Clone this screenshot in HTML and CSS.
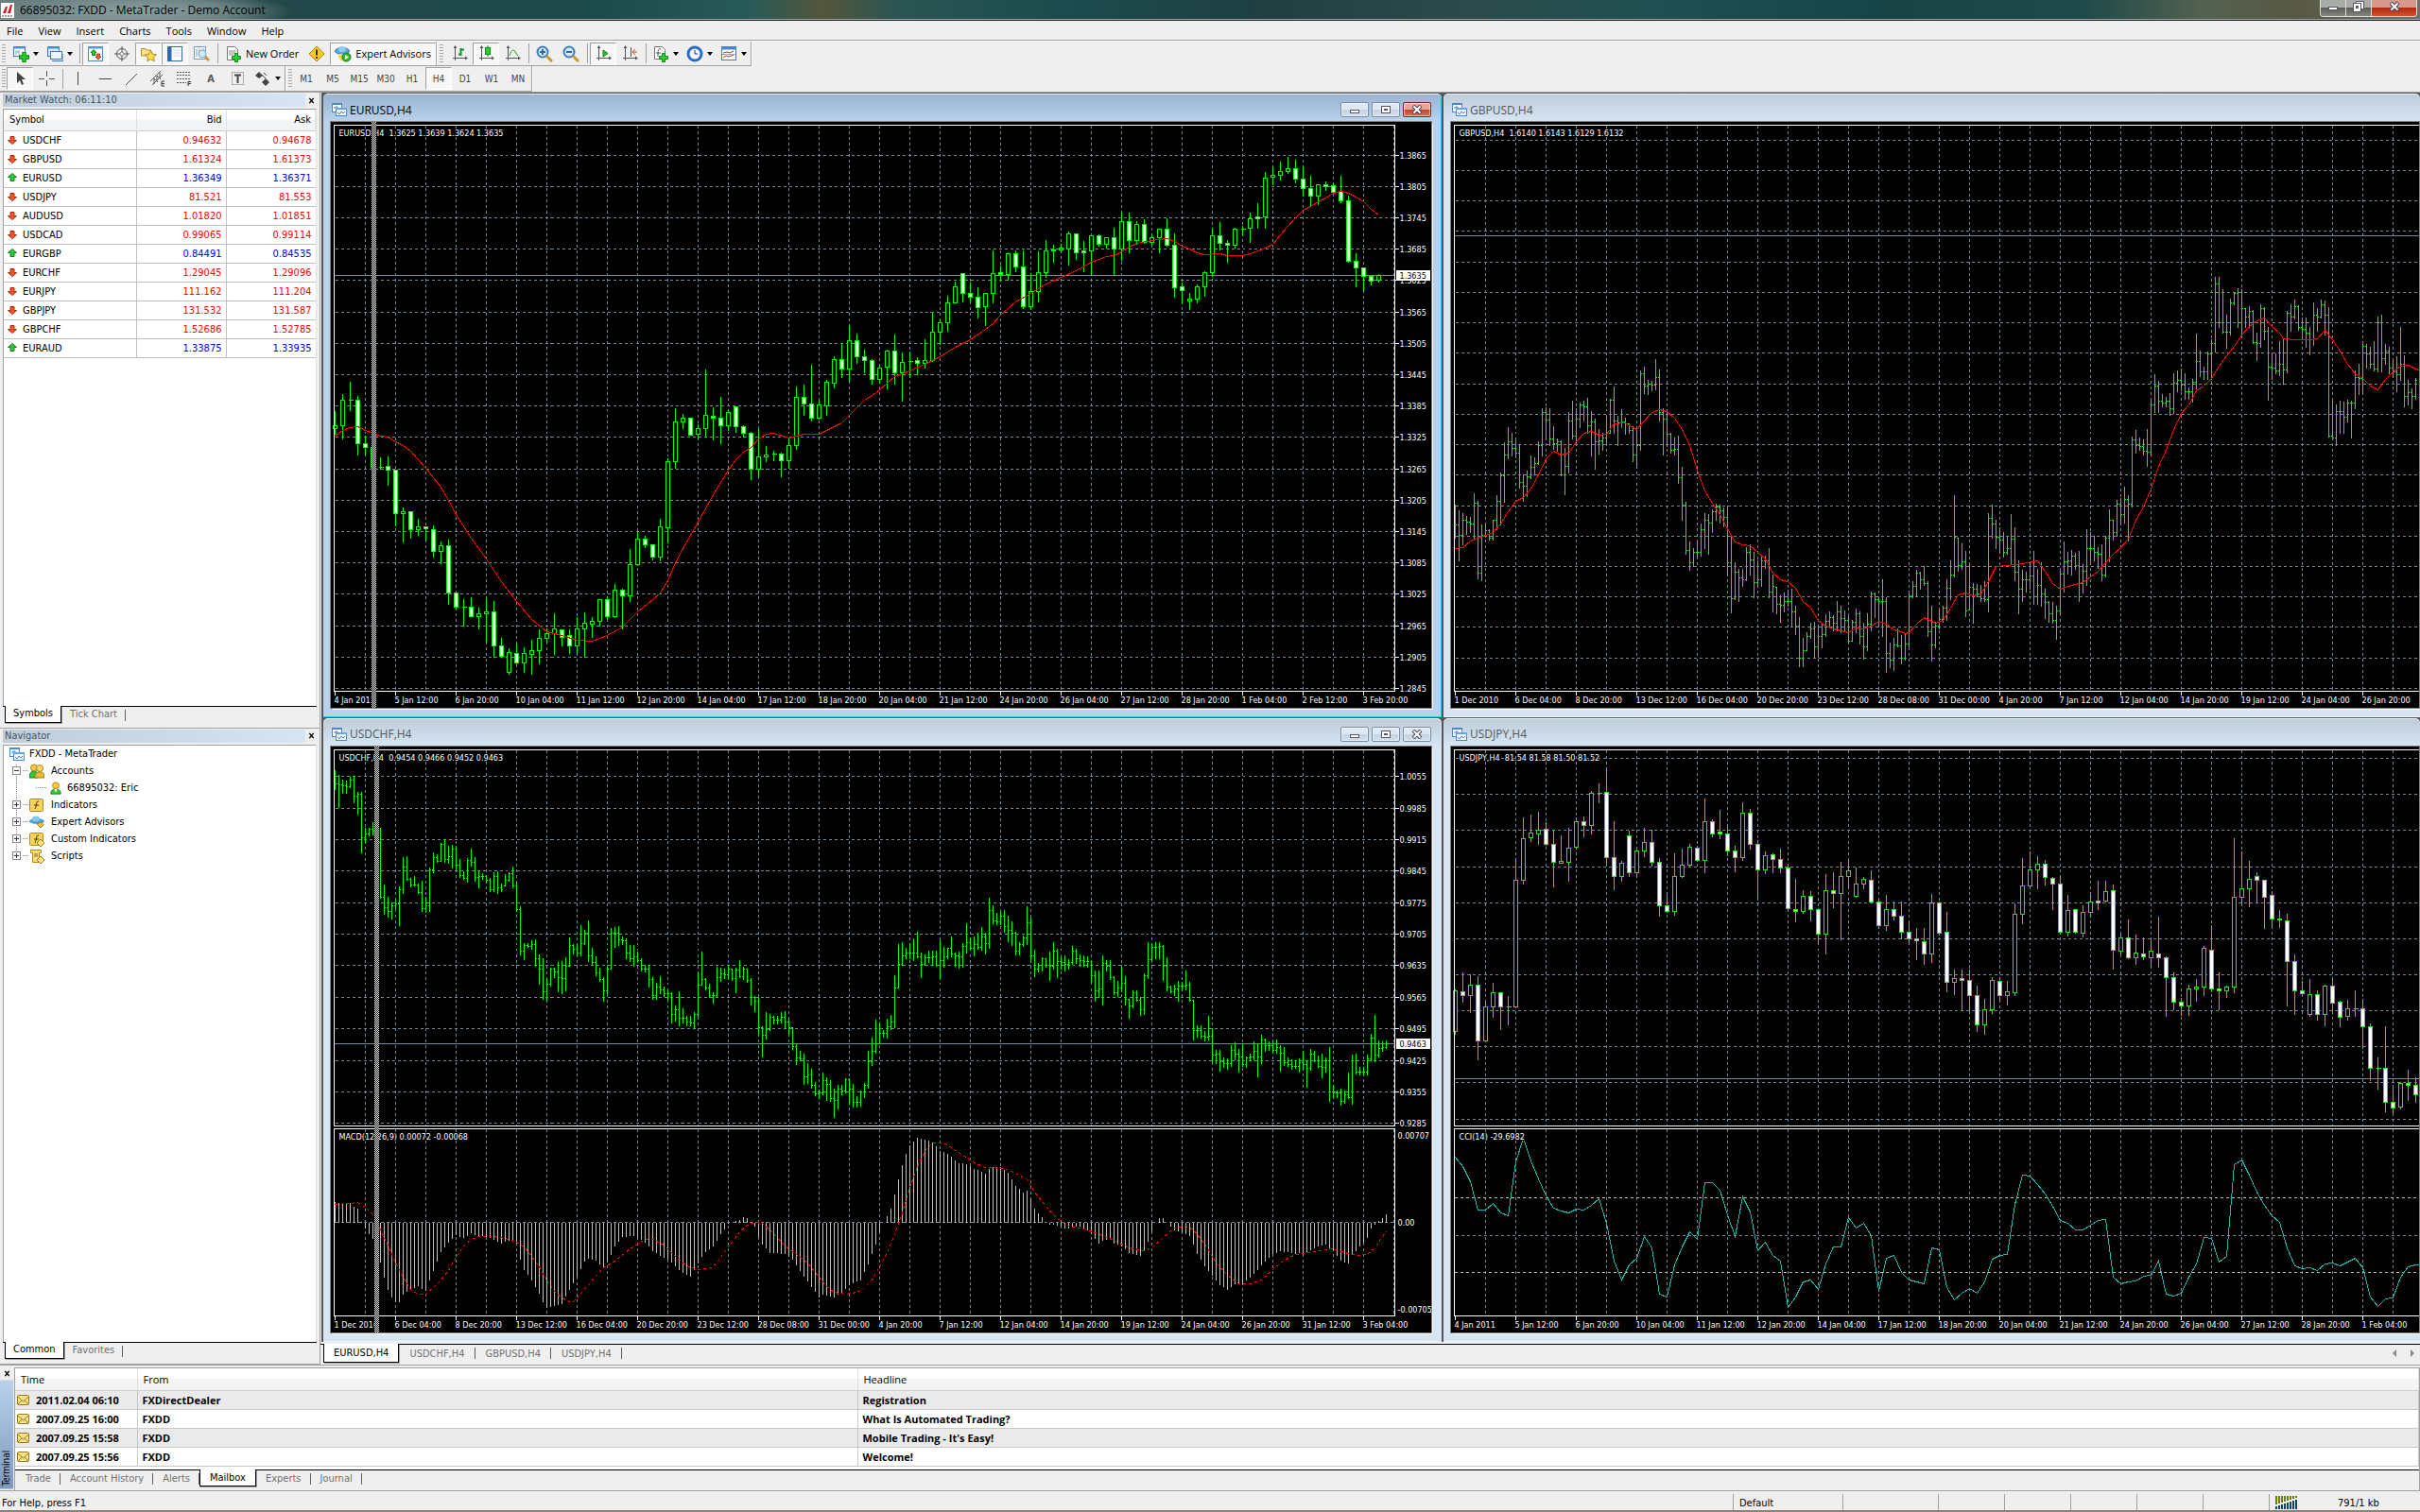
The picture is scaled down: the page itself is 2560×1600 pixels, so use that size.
FILE: index.html
```html
<!DOCTYPE html>
<html lang="en">
<head>
    <meta charset="UTF-8">
    <meta name="viewport" content="width=device-width, initial-scale=1.0">
    <title>66895032: FXDD - MetaTrader - Demo Account</title>
    <link rel="stylesheet" href="styles.css">
</head>
<body>
    <!-- Icon sprite -->
    <svg class="sprite" aria-hidden="true">
        <symbol id="i-plus" viewBox="0 0 10 10"><path d="M3.5 .5h3v3h3v3h-3v3h-3v-3h-3v-3h3z" fill="#2fd02f" stroke="#0a8a12"/></symbol>
        <symbol id="i-chart" viewBox="0 0 16 16"><rect x=".5" y="1.5" width="10" height="9" fill="#fff" stroke="#4a86c8"/><path d="M0 2h11" stroke="#4a86c8" stroke-width="2"/><path d="M2 6h2v-1h2v2h3" stroke="#4a86c8" fill="none"/><rect x="4.5" y="6.500" width="11" height="8" fill="#f4faff" stroke="#4a86c8"/><path d="M4 7h12" stroke="#6aa4e4" stroke-width="2"/><path d="M6 11l2 2 2-3 2 2 2-2" stroke="#4a86c8" fill="none"/></symbol>
        <symbol id="i-newchart" viewBox="0 0 18 18"><rect x="1.500" y="1.500" width="12" height="10" fill="#fff" stroke="#3f78b4"/><path d="M1 2.500h13" stroke="#4a90d0" stroke-width="2"/><path d="M4 5v5M7 5v5M4 7h3" stroke="#7ab"/><use href="#i-plus" x="7" y="7" width="11" height="11"/></symbol>
        <symbol id="i-profiles" viewBox="0 0 18 18"><rect x="1.500" y="1.500" width="12" height="10" fill="#d8eafc" stroke="#3f78b4"/><path d="M1 2.500h13" stroke="#4a90d0" stroke-width="2"/><rect x="4.500" y="6.500" width="12" height="8" fill="#eef6ff" stroke="#3f78b4"/><path d="M6 16.500h12V9" stroke="#3f78b4" fill="none"/></symbol>
        <symbol id="i-market" viewBox="0 0 18 18"><rect x="1.500" y="1.500" width="15" height="15" fill="#fff" stroke="#4a86c8"/><path d="M1 2.500h16" stroke="#5b9bdc" stroke-width="2"/><path d="M7 4.500l3 3H8.500v3h-3v-3H4z" fill="#2fc02f" stroke="#0a8a12"/><path d="M12 15l-3-3h1.500V9h3v3H15z" fill="#f26a3a" stroke="#b03010"/></symbol>
        <symbol id="i-target" viewBox="0 0 18 18"><circle cx="9" cy="9" r="5.500" fill="none" stroke="#555"/><circle cx="9" cy="9" r="2" fill="none" stroke="#888"/><path d="M9 1v6M9 11v6M1 9h6M11 9h6" stroke="#555"/></symbol>
        <symbol id="i-navstar" viewBox="0 0 18 18"><path d="M1.500 3.500h4l1 1.500h5v6h-10z" fill="#ffe38a" stroke="#b98b1c"/><path d="M11.500 5.500l2 3.800 4 .6-3 2.800.8 4-3.800-2-3.600 2 .7-4-3-2.800 4-.6z" fill="#ffe04a" stroke="#b58412"/></symbol>
        <symbol id="i-terminal" viewBox="0 0 18 18"><rect x="1.500" y="1.500" width="15" height="15" fill="#fff" stroke="#2d6ab0"/><path d="M3.500 2v14" stroke="#2d6ab0" stroke-width="4"/><path d="M7 5h8M7 8h8M7 11h8" stroke="#cfd8e4"/></symbol>
        <symbol id="i-tester" viewBox="0 0 18 18"><rect x="1.500" y="1.500" width="12" height="13" fill="#f6faff" stroke="#7a9ac0"/><path d="M4 4v8M7 3v7M11 3v4" stroke="#8ab"/><circle cx="10" cy="9" r="4" fill="#cfe8fb" stroke="#7aa2c4"/><path d="M13 12l4 4" stroke="#c89a3a" stroke-width="3"/></symbol>
        <symbol id="i-order" viewBox="0 0 18 18"><path d="M2.500 1.500h8l3 3v11h-11z" fill="#fff" stroke="#777"/><path d="M4 6h7M4 8h7M4 10h5" stroke="#888"/><use href="#i-plus" x="7" y="8" width="10" height="10"/></symbol>
        <symbol id="i-warn" viewBox="0 0 18 18"><path d="M9 1l8 8-8 8-8-8z" fill="#fbc92c" stroke="#b78406"/><path d="M9 4.500v6M9 12v2" stroke="#333" stroke-width="2"/></symbol>
        <symbol id="i-expert" viewBox="0 0 18 18"><ellipse cx="8" cy="6" rx="7.500" ry="3.500" fill="#5aa8dc" stroke="#2f78b0"/><ellipse cx="8" cy="4" rx="4" ry="3" fill="#8fcbf0"/><path d="M4 9c0 6 3 8 6 8l2-8z" fill="#f2d05a"/><circle cx="12.500" cy="12.500" r="4.500" fill="#2fb52f" stroke="#0a8010"/><path d="M11 10l4 2.500-4 2.500z" fill="#fff"/></symbol>
        <symbol id="i-axes" viewBox="0 0 18 18"><path d="M4.500 2v14M2 13.500h14" stroke="#555" fill="none"/><path d="M4.500 0l2 3h-4zM18 13.500l-3-2v4z" fill="#555"/></symbol>
        <symbol id="i-bars" viewBox="0 0 18 18"><use href="#i-axes"/><path d="M10.500 3v8M8 9.500h2M11 4.500h3" stroke="#0a9a1a" stroke-width="2"/></symbol>
        <symbol id="i-candle" viewBox="0 0 18 18"><use href="#i-axes"/><path d="M11 0v12" stroke="#0a8a12"/><rect x="8.500" y="2.500" width="5" height="7" fill="#2fd02f" stroke="#0a8a12"/></symbol>
        <symbol id="i-line" viewBox="0 0 18 18"><use href="#i-axes"/><path d="M6 11c2-7 5-7 6-4l3 4" stroke="#0a9a1a" fill="none"/></symbol>
        <symbol id="i-zoom" viewBox="0 0 18 18"><circle cx="7" cy="7" r="5.500" fill="#d4ecff" stroke="#3a7cc0" stroke-width="2"/><path d="M11 11l6 6" stroke="#c89a2a" stroke-width="3"/><path d="M4 7h6" stroke="#2a68b0" stroke-width="2"/></symbol>
        <symbol id="i-zoomin" viewBox="0 0 18 18"><use href="#i-zoom"/><path d="M7 4v6" stroke="#2a68b0" stroke-width="2"/></symbol>
        <symbol id="i-scroll" viewBox="0 0 18 18"><use href="#i-axes"/><path d="M9 5l5 3.500L9 12z" fill="#2fc02f" stroke="#0a8a12"/></symbol>
        <symbol id="i-shift" viewBox="0 0 18 18"><use href="#i-axes"/><path d="M10.500 2v10" stroke="#555"/><path d="M12 7h5M12 7l3-3M12 7l3 3" stroke="#d04010" fill="none"/></symbol>
        <symbol id="i-indic" viewBox="0 0 18 18"><path d="M2.500 1.500h8l3 3v10h-11z" fill="#fff" stroke="#777"/><path d="M9 4c-3-1-3 2-3 8M4 8h5" stroke="#555" fill="none"/><use href="#i-plus" x="7" y="8" width="10" height="10"/></symbol>
        <symbol id="i-clock" viewBox="0 0 18 18"><circle cx="9" cy="9" r="7" fill="#eef6ff" stroke="#2a6cc0" stroke-width="3"/><path d="M9 5v4h3" stroke="#335" fill="none"/></symbol>
        <symbol id="i-templ" viewBox="0 0 18 18"><rect x="1.500" y="1.500" width="15" height="14" fill="#fff" stroke="#3f78b4"/><path d="M1 3h16" stroke="#4a86c8" stroke-width="3"/><path d="M3 8l4-1 3 1 4-2M3 13l3-2 3 1 5-2" stroke="#a33" fill="none"/><path d="M2 9.500h14" stroke="#9ab"/></symbol>
        <symbol id="i-cursor" viewBox="0 0 18 18"><path d="M6 2v12l3-3 2 5 2-1-2-5h4z" fill="#444"/></symbol>
        <symbol id="i-cross" viewBox="0 0 18 18"><path d="M9.500 1v6M9.500 11v6M1 9.500h6M12 9.500h6" stroke="#555"/></symbol>
        <symbol id="i-vline" viewBox="0 0 18 18"><path d="M8.500 2v14" stroke="#444"/></symbol>
        <symbol id="i-hline" viewBox="0 0 18 18"><path d="M3 9.500h13" stroke="#444"/></symbol>
        <symbol id="i-trend" viewBox="0 0 18 18"><path d="M3 16L15 4" stroke="#555"/></symbol>
        <symbol id="i-channel" viewBox="0 0 18 18"><path d="M1 12L12 1M3 16L14 5M5 9v6M8 6v6M11 3v6M4 8l5 5M7 5l5 5" stroke="#555"/><path d="M16 12h-3v5h3M13 14.500h3" stroke="#333" fill="none"/></symbol>
        <symbol id="i-fib" viewBox="0 0 18 18"><path d="M1 2.500h15M1 5.500h15M1 9.500h15M1 13.500h10" stroke="#555" stroke-dasharray="2 1"/><path d="M16 12.500h-3V17M13 14.500h3" stroke="#333" fill="none"/></symbol>
        <symbol id="i-label" viewBox="0 0 18 18"><rect x="3.500" y="2.500" width="12" height="13" fill="none" stroke="#666" stroke-dasharray="1 1"/><path d="M6 5.500h7M9.500 5v9" stroke="#444" stroke-width="2"/></symbol>
        <symbol id="i-arrows" viewBox="0 0 18 18"><path d="M5 2l4 4-4 3-4-3zM12 9l4 4-4 4-4-4z" fill="#444"/><path d="M8 5l4 4M10 3l3 3" stroke="#444"/></symbol>
        <symbol id="i-up" viewBox="0 0 10 10"><path d="M5 .5l4.500 4H7v4H3v-4H.5z" fill="#2fc83c" stroke="#12801c"/></symbol>
        <symbol id="i-down" viewBox="0 0 10 10"><path d="M5 9.500l4.500-4H7v-4H3v4H.5z" fill="#f2552a" stroke="#a02c0c"/></symbol>
        <symbol id="i-person" viewBox="0 0 16 16"><path d="M2 15c0-5 3-6 6-6s6 1 6 6z" fill="#35c63a" stroke="#14801c"/><path d="M6 9l2 4 2-4" fill="#fff"/><circle cx="8" cy="5" r="4" fill="#f6c64a" stroke="#b58412"/></symbol>
        <symbol id="i-people" viewBox="0 0 16 16"><path d="M0 15c0-5 2-7 5-7s4 2 4 7z" fill="#35c63a" stroke="#14801c"/><circle cx="5" cy="4.500" r="3.500" fill="#f6c64a" stroke="#b58412"/><path d="M6 15c0-5 2-6 5-6s5 1 5 6z" fill="#e9bb3a" stroke="#a87a10"/><circle cx="11" cy="5" r="3.500" fill="#ffd866" stroke="#b58412"/></symbol>
        <symbol id="i-func" viewBox="0 0 16 16"><rect x=".5" y="1.500" width="14" height="13" rx="1" fill="#f4d35e" stroke="#b58a18"/><path d="M10 4c-3-1-2 4-4 8M5 8h5" stroke="#4a3a00" fill="none"/></symbol>
        <symbol id="i-hat" viewBox="0 0 16 16"><ellipse cx="8" cy="7" rx="8" ry="3" fill="#4f9fd6"/><ellipse cx="7" cy="4.500" rx="4" ry="3" fill="#86c5ee"/><path d="M8 10l4 4 3-3-2-3z" fill="#f0c544" stroke="#a87a10"/></symbol>
        <symbol id="i-custom" viewBox="0 0 16 16"><use href="#i-func"/><path d="M12 8l4 4-4 4-4-4z" fill="#ffe083" stroke="#a87a10"/></symbol>
        <symbol id="i-script" viewBox="0 0 16 16"><path d="M1.500 1.500h11v3h-2v7h2v3h-9v-10h-2z" fill="#f8dc78" stroke="#b58a18"/><path d="M5 6h4M5 8h4" stroke="#8a6a10"/><path d="M12 8l4 4-4 4-4-4z" fill="#ffe083" stroke="#a87a10"/></symbol>
        <symbol id="i-mail" viewBox="0 0 14 12"><rect x=".5" y=".5" width="12" height="10" rx="1" fill="#f6e28c" stroke="#9a7a1c"/><path d="M1 2l5.500 5L12 2M1 10l4-4M12 10L8 6" stroke="#9a7a1c" fill="none"/></symbol>
        <symbol id="i-min" viewBox="0 0 14 10"><rect x="2.500" y="5.500" width="9" height="3" fill="#fff" stroke="#556"/></symbol>
        <symbol id="i-max" viewBox="0 0 14 10"><rect x="2.500" y="1.500" width="9" height="7" fill="#fff" stroke="#556"/><rect x="5.500" y="4.500" width="3" height="1" fill="none" stroke="#556"/></symbol>
        <symbol id="i-restore" viewBox="0 0 14 12"><path d="M4.500 3V.5h8v8H10" fill="#fff" stroke="#556"/><rect x="1.500" y="2.500" width="8" height="9" fill="#fff" stroke="#556"/><rect x="4.500" y="5.500" width="2" height="2" fill="#777" stroke="#556"/></symbol>
        <symbol id="i-close" viewBox="0 0 14 10"><path d="M3 1l8 8M11 1L3 9" stroke="#445" stroke-width="4"/><path d="M3.500 1.500l7 7M10.500 1.500l-7 7" stroke="#fff" stroke-width="2"/></symbol>
        <symbol id="i-x" viewBox="0 0 8 8"><path d="M1.500 1l5 6M6.500 1l-5 6" stroke="#000" stroke-width="1.600"/></symbol>
    </svg>

    <header class="titlebar">
        <svg class="app-logo" viewBox="0 0 14 16"><rect width="14" height="16" fill="#fff"/><path d="M2 11l3-7h2l-2 7zM7 11l3-9h2l-2 9z" fill="#d0161c"/><path d="M1 14h12" stroke="#333" stroke-dasharray="2 1"/></svg>
        <h1>66895032: FXDD - MetaTrader - Demo Account</h1>
        <div class="app-controls">
            <button aria-label="Minimize"><svg><use href="#i-min"/></svg></button>
            <button aria-label="Restore"><svg><use href="#i-restore"/></svg></button>
            <button class="app-close" aria-label="Close"><svg><use href="#i-close"/></svg></button>
        </div>
    </header>

    <nav class="menu">
        <button>File</button><button>View</button><button>Insert</button><button>Charts</button><button>Tools</button><button>Window</button><button>Help</button>
    </nav>

    <!-- Standard toolbar -->
    <div class="toolbar">
        <div class="group">
            <span class="grip"></span>
            <button class="tool drop" aria-label="New chart"><svg><use href="#i-newchart"/></svg></button>
            <button class="tool drop" aria-label="Profiles"><svg><use href="#i-profiles"/></svg></button>
            <span class="sep"></span>
            <button class="tool pressed" aria-label="Market Watch"><svg><use href="#i-market"/></svg></button>
            <button class="tool" aria-label="Data Window"><svg><use href="#i-target"/></svg></button>
            <button class="tool pressed" aria-label="Navigator"><svg><use href="#i-navstar"/></svg></button>
            <button class="tool pressed" aria-label="Terminal"><svg><use href="#i-terminal"/></svg></button>
            <button class="tool" aria-label="Strategy Tester"><svg><use href="#i-tester"/></svg></button>
            <span class="sep"></span>
            <button class="tool wide"><svg><use href="#i-order"/></svg>New Order</button>
            <button class="tool" aria-label="MetaEditor"><svg><use href="#i-warn"/></svg></button>
            <button class="tool wide pressed"><svg><use href="#i-expert"/></svg>Expert Advisors</button>
        </div>
        <div class="group">
            <span class="grip"></span>
            <button class="tool" aria-label="Bar Chart"><svg><use href="#i-bars"/></svg></button>
            <button class="tool pressed" aria-label="Candlesticks"><svg><use href="#i-candle"/></svg></button>
            <button class="tool" aria-label="Line Chart"><svg><use href="#i-line"/></svg></button>
            <span class="sep"></span>
            <button class="tool" aria-label="Zoom In"><svg><use href="#i-zoomin"/></svg></button>
            <button class="tool" aria-label="Zoom Out"><svg><use href="#i-zoom"/></svg></button>
            <span class="sep"></span>
            <button class="tool pressed" aria-label="Auto Scroll"><svg><use href="#i-scroll"/></svg></button>
            <button class="tool" aria-label="Chart Shift"><svg><use href="#i-shift"/></svg></button>
            <span class="sep"></span>
            <button class="tool drop" aria-label="Indicators"><svg><use href="#i-indic"/></svg></button>
            <button class="tool drop" aria-label="Periods"><svg><use href="#i-clock"/></svg></button>
            <button class="tool drop" aria-label="Templates"><svg><use href="#i-templ"/></svg></button>
        </div>
    </div>

    <!-- Line studies and timeframes -->
    <div class="toolbar studies">
        <div class="group">
            <span class="grip"></span>
            <button class="tool pressed" aria-label="Cursor"><svg><use href="#i-cursor"/></svg></button>
            <button class="tool" aria-label="Crosshair"><svg><use href="#i-cross"/></svg></button>
            <span class="sep"></span>
            <button class="tool" aria-label="Vertical Line"><svg><use href="#i-vline"/></svg></button>
            <button class="tool" aria-label="Horizontal Line"><svg><use href="#i-hline"/></svg></button>
            <button class="tool" aria-label="Trendline"><svg><use href="#i-trend"/></svg></button>
            <button class="tool" aria-label="Channel"><svg><use href="#i-channel"/></svg></button>
            <button class="tool" aria-label="Fibonacci"><svg><use href="#i-fib"/></svg></button>
            <button class="tool letter">A</button>
            <button class="tool" aria-label="Text Label"><svg><use href="#i-label"/></svg></button>
            <button class="tool drop" aria-label="Arrows"><svg><use href="#i-arrows"/></svg></button>
        </div>
        <div class="group periods">
            <span class="grip"></span>
            <button class="tool">M1</button>
            <button class="tool">M5</button>
            <button class="tool">M15</button>
            <button class="tool">M30</button>
            <button class="tool">H1</button>
            <button class="tool pressed">H4</button>
            <button class="tool">D1</button>
            <button class="tool">W1</button>
            <button class="tool">MN</button>
        </div>
    </div>

    <main class="workspace">
        <aside class="dock">
            <section class="panel">
                <div class="panel-title"><h2>Market Watch: 06:11:10</h2><button aria-label="Close"><svg><use href="#i-x"/></svg></button></div>
                <div class="panel-body">
                    <table class="quotes">
                        <thead><tr><th>Symbol</th><th>Bid</th><th>Ask</th></tr></thead>
                        <tbody>
                            <tr class="down"><td><svg><use href="#i-down"/></svg>USDCHF</td><td>0.94632</td><td>0.94678</td></tr>
                            <tr class="down"><td><svg><use href="#i-down"/></svg>GBPUSD</td><td>1.61324</td><td>1.61373</td></tr>
                            <tr class="up"><td><svg><use href="#i-up"/></svg>EURUSD</td><td>1.36349</td><td>1.36371</td></tr>
                            <tr class="down"><td><svg><use href="#i-down"/></svg>USDJPY</td><td>81.521</td><td>81.553</td></tr>
                            <tr class="down"><td><svg><use href="#i-down"/></svg>AUDUSD</td><td>1.01820</td><td>1.01851</td></tr>
                            <tr class="down"><td><svg><use href="#i-down"/></svg>USDCAD</td><td>0.99065</td><td>0.99114</td></tr>
                            <tr class="up"><td><svg><use href="#i-up"/></svg>EURGBP</td><td>0.84491</td><td>0.84535</td></tr>
                            <tr class="down"><td><svg><use href="#i-down"/></svg>EURCHF</td><td>1.29045</td><td>1.29096</td></tr>
                            <tr class="down"><td><svg><use href="#i-down"/></svg>EURJPY</td><td>111.162</td><td>111.204</td></tr>
                            <tr class="down"><td><svg><use href="#i-down"/></svg>GBPJPY</td><td>131.532</td><td>131.587</td></tr>
                            <tr class="down"><td><svg><use href="#i-down"/></svg>GBPCHF</td><td>1.52686</td><td>1.52785</td></tr>
                            <tr class="up"><td><svg><use href="#i-up"/></svg>EURAUD</td><td>1.33875</td><td>1.33935</td></tr>
                        </tbody>
                    </table>
                </div>
                <div class="tabs"><button class="active">Symbols</button><button>Tick Chart</button></div>
            </section>

            <section class="panel">
                <div class="panel-title"><h2>Navigator</h2><button aria-label="Close"><svg><use href="#i-x"/></svg></button></div>
                <div class="panel-body">
                    <ul class="tree">
                        <li class="root"><svg><use href="#i-chart"/></svg>FXDD - MetaTrader</li>
                        <li><span class="box open"></span><span class="dots"></span><svg><use href="#i-people"/></svg>Accounts</li>
                        <li class="child"><span class="dots"></span><svg><use href="#i-person"/></svg>66895032: Eric</li>
                        <li><span class="box"></span><span class="dots"></span><svg><use href="#i-func"/></svg>Indicators</li>
                        <li><span class="box"></span><span class="dots"></span><svg><use href="#i-hat"/></svg>Expert Advisors</li>
                        <li><span class="box"></span><span class="dots"></span><svg><use href="#i-custom"/></svg>Custom Indicators</li>
                        <li><span class="box"></span><span class="dots"></span><svg><use href="#i-script"/></svg>Scripts</li>
                    </ul>
                </div>
                <div class="tabs"><button class="active">Common</button><button>Favorites</button></div>
            </section>
        </aside>

        <div class="charts">
            <div class="mdi">
                <section class="window active">
                    <div class="window-title">
                        <svg><use href="#i-chart"/></svg><h2>EURUSD,H4</h2>
                        <button aria-label="Minimize"><svg><use href="#i-min"/></svg></button>
                        <button aria-label="Maximize"><svg><use href="#i-max"/></svg></button>
                        <button class="close" aria-label="Close"><svg><use href="#i-close"/></svg></button>
                    </div>
                    <div class="client"><svg class="chart" id="eurusd"></svg><div class="splitter"></div></div>
                </section>
                <section class="window cut">
                    <div class="window-title"><svg><use href="#i-chart"/></svg><h2>GBPUSD,H4</h2></div>
                    <div class="client"><svg class="chart" id="gbpusd"></svg></div>
                </section>
                <section class="window">
                    <div class="window-title">
                        <svg><use href="#i-chart"/></svg><h2>USDCHF,H4</h2>
                        <button aria-label="Minimize"><svg><use href="#i-min"/></svg></button>
                        <button aria-label="Maximize"><svg><use href="#i-max"/></svg></button>
                        <button aria-label="Close"><svg><use href="#i-close"/></svg></button>
                    </div>
                    <div class="client"><svg class="chart" id="usdchf"></svg><div class="splitter second"></div></div>
                </section>
                <section class="window cut">
                    <div class="window-title"><svg><use href="#i-chart"/></svg><h2>USDJPY,H4</h2></div>
                    <div class="client"><svg class="chart" id="usdjpy"></svg></div>
                </section>
            </div>
            <div class="tabs chart-tabs">
                <button class="active">EURUSD,H4</button><button>USDCHF,H4</button><button>GBPUSD,H4</button><button>USDJPY,H4</button>
                <svg class="tab-arrows" viewBox="0 0 24 10"><path d="M4 1v8L0 5zM19 1v8l4-4z" fill="#888"/></svg>
            </div>
        </div>
    </main>

    <section class="terminal">
        <div class="side">
            <button aria-label="Close"><svg><use href="#i-x"/></svg></button>
            <h2>Terminal</h2>
        </div>
        <div class="terminal-body">
            <table class="mail">
                <thead><tr><th>Time</th><th>From</th><th>Headline</th></tr></thead>
                <tbody>
                    <tr><td><svg><use href="#i-mail"/></svg>2011.02.04 06:10</td><td>FXDirectDealer</td><td>Registration</td></tr>
                    <tr><td><svg><use href="#i-mail"/></svg>2007.09.25 16:00</td><td>FXDD</td><td>What Is Automated Trading?</td></tr>
                    <tr><td><svg><use href="#i-mail"/></svg>2007.09.25 15:58</td><td>FXDD</td><td>Mobile Trading - It's Easy!</td></tr>
                    <tr><td><svg><use href="#i-mail"/></svg>2007.09.25 15:56</td><td>FXDD</td><td>Welcome!</td></tr>
                </tbody>
            </table>
            <div class="tabs"><button>Trade</button><button>Account History</button><button>Alerts</button><button class="active">Mailbox</button><button>Experts</button><button>Journal</button></div>
        </div>
    </section>

    <footer class="status">
        <span class="help">For Help, press F1</span>
        <span class="cell profile">Default</span>
        <span class="cell date"></span>
        <span class="cell"></span>
        <span class="cell"></span>
        <span class="cell"></span>
        <span class="cell"></span>
        <span class="cell"></span>
        <span class="cell traffic">
            <svg viewBox="0 0 24 14"><path d="M1 0v9M4 0v8M7 0v7M10 0v6M13 0v5M16 0v4M19 0v3M22 0v2" stroke="#6b7d0e" stroke-width="2"/><path d="M1 14v-3M4 14v-4M7 14v-5M10 14V8M13 14V7M16 14V6M19 14V5M22 14V4" stroke="#0d4468" stroke-width="2"/></svg>
            791/1 kb
        </span>
    </footer>

    <script src="charts.js"></script>
</body>
</html>
```
FILE: styles.css
```css
* {
    box-sizing: border-box;
}
body {
    margin: 0;
    height: 100vh;
    display: flex;
    flex-direction: column;
    overflow: hidden;
    background: #efefef;
    border-bottom: 2px solid #8a8474;
    font: 11px "DejaVu Sans Condensed", "DejaVu Sans", sans-serif;
    color: #000;
}
h1, h2 {
    margin: 0;
    font-size: inherit;
    font-weight: normal;
}
button {
    margin: 0;
    padding: 0;
    border: 0;
    background: none;
    font: inherit;
    color: inherit;
}
.sprite {
    display: none;
}

/* Title bar */
.titlebar {
    height: 22px;
    display: flex;
    align-items: center;
    border-bottom: 1px solid #222;
    box-shadow: inset 0 -1px #9aa5a3;
    background:
        radial-gradient(ellipse 160px 22px at 150px 12px, rgba(150, 168, 168, .9), rgba(130, 150, 150, .7) 60%, transparent),
        linear-gradient(90deg, #6c7f80 0, #24484a 11%, #1d4a4b 24%, #275a58 31%, #54563c 34%, #2b5553 37%, #1c4c4e 44%, #1f3f42 52%, #2d4a4a 60%, #205052 68%, #174446 78%, #1e4a4a 86%, #536150 91%, #585844 95%, #70706a);
}
.app-logo {
    width: 14px;
    height: 16px;
    margin: 0 6px 0 1px;
}
.titlebar h1 {
    flex: 1;
    font: 12px "Open Sans", sans-serif;
}
.app-controls {
    display: flex;
    align-self: flex-start;
    height: 18px;
    margin-right: 3px;
    border: 1px solid #ddd;
    border-top: 0;
    border-radius: 0 0 4px 4px;
    overflow: hidden;
}
.app-controls button {
    width: 27px;
    border-right: 1px solid #ddd;
    background: linear-gradient(#a9aba6 45%, #5c5d57 50%, #85867e);
}
.app-controls svg {
    width: 14px;
    height: 12px;
}
.app-controls .app-close {
    width: 47px;
    border: 0;
    background: linear-gradient(#d9988c 45%, #b02a10 50%, #d4512c);
}

/* Menu and toolbars */
.menu {
    height: 21px;
    display: flex;
    align-items: center;
    gap: 16px;
    padding-left: 7px;
    border-bottom: 1px solid #a0a0a0;
    font: 11px "Open Sans", sans-serif;
}
.toolbar {
    height: 27px;
    display: flex;
    border-top: 1px solid #fff;
}
.toolbar.studies {
    border-top: 0;
}
.group {
    display: flex;
    align-items: center;
    padding-left: 2px;
    border-right: 1px solid #a0a0a0;
    border-bottom: 1px solid #a0a0a0;
    box-shadow: 1px 0 #fff;
}
.group + .group {
    padding-left: 3px;
}
.grip {
    width: 4px;
    height: 20px;
    margin-right: 3px;
    background: repeating-linear-gradient(#a8a8a8 0 1px, transparent 1px 3px);
}
.studies .grip {
    margin-right: 1px;
}
.sep {
    width: 1px;
    height: 21px;
    margin: 0 2px 0 3px;
    background: #a0a0a0;
}
.tool {
    min-width: 28px;
    height: 24px;
    display: flex;
    align-items: center;
    justify-content: center;
    border: 1px solid transparent;
}
.tool svg {
    width: 18px;
    height: 18px;
}
.tool.pressed {
    background: #f7f7f7;
    border-color: #a0a0a0 #fff #fff #a0a0a0;
}
.tool.drop {
    width: 36px;
    gap: 4px;
}
.tool.drop::after {
    content: "";
    border: 3px solid transparent;
    border-top: 4px solid #000;
    border-bottom: 0;
}
.tool.wide {
    padding: 0 4px;
    gap: 4px;
    font: 11px "Open Sans", sans-serif;
}
.tool.letter {
    font-weight: bold;
    color: #555;
}
.periods .tool {
    font-size: 10px;
    color: #444;
}

/* Workspace: docked panels and charts */
.workspace {
    flex: 1;
    min-height: 0;
    display: flex;
    border-top: 1px solid #a0a0a0;
}
.dock {
    width: 339px;
    display: flex;
    flex-direction: column;
    border-right: 1px solid #a0a0a0;
}
.panel {
    flex: 1;
    min-height: 0;
    display: flex;
    flex-direction: column;
    padding: 1px 3px 0;
    border-bottom: 1px solid #a0a0a0;
}
.panel-title {
    height: 14px;
    display: flex;
    align-items: center;
    margin-bottom: 2px;
}
.panel-title h2 {
    flex: 1;
    line-height: 14px;
    padding-left: 2px;
    color: #46545f;
    background: linear-gradient(90deg, #bfcddb, #d7e4f2);
}
.panel-title button {
    width: 12px;
    height: 14px;
}
.panel-title svg, .side svg {
    width: 7px;
    height: 7px;
    display: block;
    margin: auto;
}
.panel-body {
    flex: 1;
    min-height: 0;
    background: #fff;
    border: 1px solid #a0a0a0;
    border-right-color: #e3e3e3;
    border-bottom: 0;
}
.tabs {
    height: 23px;
    display: flex;
    align-items: flex-start;
    padding-left: 2px;
    border-top: 1px solid #000;
    color: #707070;
    line-height: 16px;
}
.tabs button {
    height: 17px;
    padding: 0 9px;
    position: relative;
}
.tabs button::after {
    content: "";
    position: absolute;
    right: 0;
    top: 3px;
    height: 12px;
    border-right: 1px solid #606060;
}
.tabs .active {
    height: 18px;
    margin-top: -1px;
    padding: 0 8px;
    color: #000;
    background: #fff;
    border: 1px solid #000;
    border-top: 0;
    box-shadow: 1px 1px #a0a0a0;
}
.tabs .active::after {
    display: none;
}

table {
    width: 100%;
    border-collapse: collapse;
    table-layout: fixed;
}
th {
    font-weight: normal;
    text-align: left;
    background: linear-gradient(#fff 45%, #f3f5f7 50%, #f0f2f4);
    border-right: 1px solid #dedfe1;
    border-bottom: 1px solid #d0d0d0;
}
.quotes th, .quotes td {
    padding: 0 4px;
    text-align: right;
}
.quotes th {
    height: 22px;
}
.quotes td {
    height: 20px;
    border: 1px solid #c0c0c0;
    border-left: 0;
}
.quotes th:first-child, .quotes td:first-child {
    width: 140px;
    text-align: left;
}
.quotes th:first-child {
    padding-left: 6px;
}
.quotes th:nth-child(2) {
    width: 95px;
}
.quotes td:last-child {
    border-right: 0;
}
.quotes svg {
    width: 10px;
    height: 10px;
    margin-right: 6px;
    vertical-align: -1px;
}
.up td + td {
    color: #00f;
}
.down td + td {
    color: #f00;
}

.tree {
    margin: 0;
    padding: 0;
    list-style: none;
    position: relative;
}
.tree::before {
    content: "";
    position: absolute;
    left: 13px;
    top: 20px;
    height: 99px;
    border-left: 1px dotted #888;
}
.tree li {
    height: 18px;
    display: flex;
    align-items: center;
    padding-left: 9px;
    gap: 2px;
}
.tree svg {
    width: 16px;
    height: 16px;
    margin-right: 5px;
}
.tree .root {
    padding-left: 6px;
    gap: 0;
}
.tree .child {
    padding-left: 34px;
}
.tree .child svg {
    width: 14px;
    margin: 0 3px 0 1px;
}
.dots {
    width: 5px;
    border-top: 1px dotted #888;
}
.child .dots {
    width: 11px;
}
.box {
    width: 9px;
    height: 9px;
    position: relative;
    border: 1px solid #888;
    background: linear-gradient(#336, #336) center / 5px 1px no-repeat, linear-gradient(#336, #336) center / 1px 5px no-repeat, #fff;
}
.box.open {
    background: linear-gradient(#336, #336) center / 5px 1px no-repeat, #fff;
}

.charts {
    flex: 1;
    min-width: 0;
    display: flex;
    flex-direction: column;
}
.mdi {
    flex: 1;
    min-height: 0;
    display: grid;
    grid-template-columns: 1183fr 1033fr;
    grid-template-rows: 1fr 1fr;
    gap: 1px 2px;
    padding: 1px 0 0 2px;
    margin-left: 1px;
    background: #55565a;
}
.window {
    min-width: 0;
    min-height: 0;
    display: flex;
    flex-direction: column;
    padding: 0 11px 9px 8px;
    background: #d7e4f2;
    border: 1px solid #eef4fa;
    border-width: 1px 0;
    border-radius: 5px 5px 0 0;
}
.window.active {
    background: #b9d1ea;
    border-bottom-color: #2bc8ee;
    box-shadow: inset -1px 0 #2bc8ee;
}
.window.cut {
    padding-right: 1px;
}
.window-title {
    height: 28px;
    display: flex;
    align-items: center;
    gap: 3px;
    margin: 0 -10px 1px -8px;
    padding: 4px 10px 0 9px;
    color: #50585f;
    background: linear-gradient(#bfcddb, #d7e4f2);
    border-radius: 5px 5px 0 0;
    font: 12px "Open Sans", sans-serif;
}
.cut .window-title {
    margin-right: -1px;
}
.active .window-title {
    color: #000;
    background: linear-gradient(#99b4d1, #b9d1ea);
}
.window-title > svg {
    width: 16px;
    height: 16px;
}
.window-title h2 {
    flex: 1;
}
.window-title button {
    width: 30px;
    height: 16px;
    border: 1px solid #7c8ba0;
    border-radius: 2px;
    background: linear-gradient(#dde8f3 50%, #c3d2e2 50%, #d3e0ee);
    box-shadow: inset 0 0 0 1px rgba(255, 255, 255, .5);
}
.window-title button svg {
    width: 14px;
    height: 10px;
    display: block;
    margin: auto;
}
.active .window-title .close {
    border-color: #6b2a26;
    background: linear-gradient(#e4a59a 50%, #c2452c 50%, #d6705a);
}
.client {
    flex: 1;
    min-height: 0;
    position: relative;
    background: #000;
    outline: 1px solid #808080;
    box-shadow: 2px 2px #fff;
}
.chart {
    width: 100%;
    height: 100%;
    display: block;
    font-size: 9px;
    fill: #fff;
}
/* Dithered line left by a dragged panel edge */
.splitter {
    position: absolute;
    left: 43px;
    top: 0;
    bottom: 0;
    width: 5px;
    background: repeating-conic-gradient(#000 0 25%, #fff 0 50%) 0 0 / 2px 2px;
}
.splitter.second {
    left: 46px;
}
.chart-tabs {
    height: 22px;
    margin-top: 2px;
    padding-left: 3px;
}
.chart-tabs button {
    height: 19px;
    padding: 0 11px;
    line-height: 19px;
}
.chart-tabs .active {
    height: 20px;
    padding: 0 10px;
}
.tab-arrows {
    width: 24px;
    height: 10px;
    margin: 4px 5px 0 auto;
}

/* Terminal */
.terminal {
    display: flex;
    border-top: 1px solid #a0a0a0;
    border-bottom: 1px solid #a0a0a0;
    padding-top: 2px;
}
.side {
    width: 15px;
    display: flex;
    flex-direction: column;
}
.side button {
    height: 14px;
}
.side h2 {
    flex: 1;
    width: 14px;
    line-height: 14px;
    padding-top: 3px;
    margin-bottom: 2px;
    writing-mode: vertical-rl;
    transform: rotate(180deg);
    font-size: 10px;
    background: linear-gradient(#7c99bd, #b9d1ea);
}
.terminal-body {
    flex: 1;
    background: #fff;
    border: 1px solid #a0a0a0;
    border-bottom: 0;
}
.terminal-body .tabs {
    height: 22px;
    margin-top: 3px;
    padding-left: 1px;
    background: #efefef;
}
.terminal-body .tabs button {
    padding: 0 10px;
}
.mail th {
    height: 24px;
    padding-left: 6px;
    font: 11px "Open Sans", sans-serif;
}
.mail td {
    height: 20px;
    padding: 0 0 0 5px;
    border: 1px solid #c8c8c8;
    border-left: 0;
    font: bold 11px "Open Sans", sans-serif;
}
.mail th:first-child {
    width: 129px;
}
.mail th:nth-child(2) {
    width: 762px;
}
.mail td:first-child {
    padding-left: 2px;
}
.mail svg {
    width: 14px;
    height: 12px;
    margin-right: 6px;
    vertical-align: -2px;
}
.mail tbody tr:nth-child(odd) {
    background: #eaeaea;
}

/* Status bar */
.status {
    height: 20px;
    display: flex;
    align-items: stretch;
    font-size: 11px;
}
.help {
    flex: 1;
    padding-left: 2px;
    line-height: 25px;
}
.cell {
    width: 70px;
    margin-top: 3px;
    padding-left: 6px;
    line-height: 19px;
    border-left: 1px solid #a0a0a0;
}
.profile {
    width: 116px;
}
.date {
    width: 101px;
}
.traffic {
    width: 160px;
    display: flex;
    gap: 42px;
}
.traffic svg {
    width: 24px;
    height: 14px;
    margin-top: 2px;
}
```
FILE: charts.js
```js
// Candles: high, body top, body bottom, low. Suffix d = falling (filled)
// All values run downwards on the scale given by top/bottom of the pane
const eurusd = `793 831 838 851,752 769 831 864,722 769 769 793,757 769 875 903d,853 875 884 901d,866 884 933 935,907 932 932 936,905 930 940 975d,938 938 1046 1074d,1028 1041 1046 1115,
1040 1041 1085 1104d,1056 1077 1085 1099,1075 1078 1081 1108d,1073 1085 1136 1150d,1112 1124 1136 1168,1107 1124 1238 1267d,1235 1239 1272 1278d,1252 1272 1272 1318,1247 1272 1295 1296d,1274 1290 1295 1326,
1252 1285 1290 1358,1257 1285 1368 1394d,1347 1368 1392 1396d,1371 1384 1431 1437,1363 1385 1410 1412d,1370 1386 1410 1433,1351 1378 1387 1437,1325 1350 1378 1411,1324 1338 1350 1358,1287 1327 1338 1387,
1326 1329 1346 1367d,1325 1342 1368 1386d,1296 1327 1368 1384,1285 1313 1327 1396,1297 1308 1314 1346,1255 1255 1308 1320,1246 1255 1295 1302d,1215 1232 1295 1299,1228 1232 1246 1326d,1129 1169 1246 1258,
1089 1106 1170 1171,1099 1106 1122 1127d,1122 1122 1150 1158d,1056 1077 1150 1161,909 918 1080 1117,786 822 919 935,800 813 822 838,809 813 853 854d,825 838 852 864,692 806 838 855,
784 808 812 866d,759 813 831 875d,791 798 831 842,784 785 833 846d,828 833 849 858d,844 850 937 963d,838 907 937 955,880 901 907 919,891 900 900 915,895 900 917 954d,
860 880 917 935,733 762 878 889,729 762 778 806d,680 778 813 820d,769 780 813 814,718 725 783 806,659 670 727 739,628 670 693 713d,585 624 693 721,604 624 662 679d,
644 662 672 702d,666 672 718 730d,683 690 718 727,643 648 688 741,606 648 702 729d,650 677 702 771,648 675 675 712,662 672 679 706d,618 672 679 691,555 603 672 673,
571 580 603 633,513 531 580 600,478 492 531 532,457 459 508 529d,480 508 517 527d,493 517 543 567d,506 508 541 587,402 459 508 532,440 458 462 477d,407 411 462 475,
401 411 444 454d,401 444 541 546d,457 504 541 545,404 458 504 528,376 405 458 470,389 402 404 433d,385 398 402 407,355 363 399 440,360 363 409 424d,379 405 409 454d,
367 368 405 462,364 368 389 392d,370 373 388 397,346 373 400 462d,306 333 400 427,310 333 379 410d,330 340 379 389,326 340 384 386d,360 373 384 390,348 351 373 410,
324 351 390 394d,360 391 494 518d,480 492 501 533d,505 522 527 548,486 492 522 532,453 458 492 514,347 368 458 466,332 368 386 401d,376 386 391 431d,346 351 391 397,
343 351 351 368,310 325 349 383,286 322 325 348d,210 227 322 348,200 220 225 242,186 210 220 231,175 204 212 216,182 204 230 239d,195 229 253 270d,219 252 271 297d,
240 242 271 292,234 243 247 257d,239 245 261 264d,221 260 283 286d,268 282 430 432d,408 430 446 491d,444 446 467 502d,463 467 479 487d,459 464 476 480`;

// Moving averages and indicators: index:value, straight lines in between
const eurusdMA = `0:855 1:843 2:836 3:833 4:841 5:850 6:856 7:859 8:869 9:879 10:892 11:913 12:934 13:957 14:980 15:1012 16:1048 18:1105 20:1155 22:1210 24:1260 26:1302 28:1332 30:1341 32:1354 34:1357 36:1342 38:1322 40:1285 42:1255 43:1238 44:1208 45:1165 46:1130 48:1065 50:998 52:938 53:913 54:896 55:884 56:862 57:852 58:850 60:860 61:855 62:852 64:851 65:843 66:834 67:823 68:806 70:768 71:758 72:742 73:726 74:710 75:703 76:697 78:682 80:662 82:640 84:621 86:596 87:582 88:562 89:544 90:529 92:508 94:486 96:468 98:452 100:431 102:419 103:417 104:407 105:396 106:387 108:380 109:376 110:374 111:382 112:392 113:400 114:409 115:413 117:411 118:415 120:415 121:411 122:405 123:398 124:388 125:366 126:345 127:324 128:306 129:295 130:285 131:275 132:265 133:260 134:265 135:274 136:284 137:303 138:318`;

const usdjpy = `652 657 755 761,612 659 667 683d,615 642 667 708,620 642 777 823d,680 696 776 780,636 662 696 720,660 662 696 750d,667 696 696 738,335 390 695 696,238 290 390 400,
230 276 288 296,225 269 278 303,250 268 303 305d,268 303 348 405d,280 344 349 350,263 312 346 392,238 249 311 314,236 249 258 285d,175 181 258 278,155 181 181 203,
118 178 335 350d,246 335 382 413d,342 349 382 392,270 283 372 380d,310 319 372 380,263 299 319 334,268 299 346 355d,335 346 451 476d,425 451 465 468d,325 380 465 475,
312 353 380 383,302 310 353 355,306 312 342 345d,192 249 342 373,243 249 279 285d,220 275 278 290d,255 278 319 330d,306 319 335 369d,201 228 335 342,218 228 304 315d,
293 303 365 433d,320 331 365 375,325 328 340 372d,312 340 360 372d,355 360 458 462d,385 460 465 490d,412 428 465 470,415 428 460 488d,457 460 521 545d,375 415 521 568,
370 415 422 457d,345 380 422 533,342 367 380 410,358 399 428 430,380 387 399 410,365 390 443 445d,437 443 499 503d,425 460 499 510,440 460 477 485d,440 477 515 532d,
488 515 531 540d,503 531 535 582d,503 537 567 592d,423 444 567 588,440 444 517 523d,465 515 637 658d,603 628 637 665,603 628 632 703d,605 632 667 705d,642 667 738 754d,
675 703 738 761,623 632 703 710,625 633 667 680d,632 658 667 690,445 472 660 668,335 403 473 495,319 365 403 408,332 351 365 410,340 351 384 402d,380 385 399 460d,
378 399 515 520d,425 462 516 525,458 460 515 517d,450 468 518 526,423 443 468 476,390 441 444 460d,390 417 441 443,400 415 559 603d,518 528 560 568,484 528 577 580d,
520 565 577 592,527 567 575 582d,530 562 577 592,477 567 576 600d,573 576 624 718d,612 624 683 703d,673 683 692 715d,640 653 692 715,626 647 653 682,548 555 647 668,
497 558 653 658d,612 652 657 702d,642 647 656 672,287 430 647 660,320 410 432 448,342 387 410 454,370 382 390 445d,387 390 432 507d,415 427 483 503d,460 483 486 503d,
470 487 587 692d,568 587 657 713d,632 656 663 664d,627 665 713 718,655 665 714 728d,640 644 713 740,622 646 685 712d,680 684 720 742d,678 699 719 726,655 699 699 718,
675 699 744 795d,735 744 844 872d,815 844 844 894,740 844 924 948d,888 924 938 950d,874 880 936 940,845 880 885 920d,863 885 908 926d`;

const cci = `0:1057 1:1080 2:1115 3:1183 4:1183 5:1168 6:1190 7:1198 8:1068 9:1012 10:1065 11:1110 12:1150 13:1180 14:1185 15:1191 16:1182 17:1184 18:1172 19:1157 20:1215 21:1305 22:1350 23:1314 24:1300 25:1246 26:1273 27:1386 28:1392 29:1315 30:1272 31:1235 32:1254 33:1119 34:1119 35:1135 36:1196 37:1247 38:1152 39:1188 40:1281 41:1260 42:1293 43:1306 44:1416 45:1391 46:1356 47:1351 48:1374 49:1312 50:1271 51:1271 52:1202 53:1226 54:1216 55:1245 56:1378 57:1300 58:1292 59:1333 60:1350 61:1356 62:1360 63:1273 64:1278 65:1370 66:1398 67:1382 68:1372 69:1382 70:1356 71:1301 72:1293 73:1289 74:1170 75:1099 76:1101 77:1122 78:1145 79:1175 80:1208 81:1215 82:1230 83:1230 84:1219 85:1209 86:1206 87:1345 88:1361 89:1355 90:1353 91:1342 92:1339 93:1305 94:1386 95:1390 96:1383 97:1345 98:1312 99:1250 100:1251 101:1307 102:1295 103:1074 104:1064 105:1100 106:1140 107:1173 108:1198 109:1213 110:1275 111:1316 112:1324 113:1322 114:1328 115:1312 116:1310 117:1316 118:1307 119:1298 120:1322 121:1392 122:1414 123:1397 124:1394 125:1345 126:1319 127:1315 128:1312`;

// Bars: high, low, close. Each bar opens at the previous close
const usdchf = `127 172 158,137 215 160,148 181 162,152 181 165,142 168 148,139 204 188,178 230 184,178 323 288,266 298 278,266 283 268,252 280 272,262 303 299,266 434 432,402 471 456,431 480 466,444 484 451,440 458 446,405 500 412,336 422 359,334 390 387,
386 407 402,380 404 401,400 423 419,393 465 458,430 467 451,361 466 366,325 372 336,328 346 344,302 345 303,292 348 341,309 350 334,305 360 314,309 363 353,341 383 379,370 387 385,338 395 343,314 357 348,335 392 383,367 409 380,375 387 381,
378 394 390,386 418 414,373 418 380,370 423 409,400 418 412,376 404 391,371 393 374,359 409 404,398 466 461,453 570 560,542 582 548,542 552 550,536 556 544,533 597 580,570 640 605,580 676 658,627 680 641,601 645 605,602 625 610,588 658 624,
587 664 628,577 657 597,528 598 548,544 567 557,545 569 565,500 573 543,511 546 518,489 586 573,555 592 588,575 619 613,601 633 630,624 682 656,598 664 604,507 605 518,505 551 518,502 548 534,527 544 535,531 580 566,548 587 579,547 597 575,
563 587 584,580 608 603,594 611 605,594 647 630,625 677 668,639 676 648,623 663 655,647 670 663,655 678 664,660 735 714,693 730 702,659 741 722,700 735 723,718 740 732,718 741 735,708 748 713,613 718 643,564 643 630,627 655 650,640 673 667,
662 686 667,600 670 625,601 634 615,603 627 617,595 626 604,604 632 628,602 660 606,584 624 622,599 630 604,603 637 632,628 690 673,670 707 682,673 760 745,742 816 763,709 773 750,714 752 720,718 736 727,717 736 727,708 734 720,707 748 732,
726 760 745,745 797 791,786 834 818,803 826 821,808 882 863,831 880 860,845 892 885,877 909 905,895 917 903,854 906 872,865 921 882,873 923 915,893 961 920,884 940 893,883 907 898,869 902 870,868 930 893,881 937 925,911 936 925,898 934 900,
879 914 885,802 890 828,770 836 803,727 807 783,734 783 758,752 768 760,724 770 743,715 750 731,620 745 650,545 650 592,541 594 572,553 580 565,543 578 565,532 583 566,516 576 574,566 625 592,570 594 576,562 588 576,561 596 574,562 598 595,
536 628 583,552 600 574,553 579 555,527 575 568,565 598 573,564 601 575,542 600 550,494 566 541,528 559 555,527 573 546,517 556 551,503 558 527,518 568 543,434 553 464,452 495 487,469 497 491,468 498 477,464 515 502,477 538 511,491 547 517,
515 571 562,541 569 545,525 549 529,454 544 492,481 583 572,559 623 605,590 612 594,577 608 580,578 599 596,564 632 597,540 605 562,557 625 585,576 605 588,573 608 592,582 605 588,549 592 562,556 590 580,570 597 584,573 598 585,574 600 585,
585 635 620,608 682 657,609 673 652,572 690 590,583 608 598,583 630 625,622 665 662,633 670 650,598 658 638,622 690 678,677 723 693,657 697 662,656 682 680,672 716 702,615 714 620,541 627 581,544 584 552,541 580 552,540 580 549,547 632 598,
577 657 648,646 662 659,642 668 652,633 682 646,636 656 645,608 655 642,635 682 680,679 775 752,740 768 752,740 770 766,755 777 768,717 775 765,747 828 812,800 832 808,800 850 827,818 842 831,820 846 832,788 838 800,782 822 808,797 852 815,
783 838 835,815 840 818,808 824 815,779 822 803,783 864 815,764 832 775,772 802 788,780 801 789,782 805 800,775 806 794,788 850 806,792 836 830,819 838 833,822 845 839,825 844 839,820 852 829,802 845 833,826 889 844,798 847 808,802 828 826,
813 842 838,808 865 840,818 852 825,792 922 900,885 914 903,898 913 903,893 932 923,897 927 908,854 916 914,811 929 825,808 857 852,840 858 852,840 858 852,812 858 820,762 825 770,716 828 812,778 815 795,780 802 793,776 795 783`;

const macd = `0:1164 2:1168 4:1165 5:1175 6:1179 7:1210 8:1227 9:1240 10:1252 11:1264 12:1308 13:1345 14:1374 15:1392 16:1403 17:1402 18:1386 19:1379 20:1372 22:1365 23:1372 24:1376 25:1352 26:1329 28:1283 30:1260 32:1243 34:1250 36:1238 38:1245 40:1246 44:1262 46:1256 47:1255 48:1262 49:1302 50:1325 52:1350 54:1382 55:1403 56:1416 58:1411 60:1408 62:1373 64:1343 66:1305 67:1300 69:1304 71:1320 73:1291 74:1270 76:1247 79:1244 82:1260 84:1280 86:1293 88:1301 90:1317 92:1334 94:1341 96:1310 97:1294 98:1283 100:1270 102:1240 104:1216 105:1214 106:1208 107:1207 108:1200 109:1202 110:1214 111:1222 112:1247 113:1265 115:1285 119:1288 121:1302 124:1342 128:1391 129:1385 132:1391 134:1380 136:1362 139:1350 141:1312 143:1264 144:1235 145:1214 146:1198 147:1179 148:1145 149:1109 150:1075 151:1048 152:1028 153:1018 154:1010 156:1014 158:1020 160:1040 162:1048 165:1070 167:1073 169:1083 171:1090 172:1095 173:1084 174:1079 176:1079 178:1092 180:1124 182:1140 183:1136 184:1154 185:1178 186:1190 187:1200 188:1212 189:1217 191:1219 193:1227 195:1224 197:1221 199:1230 202:1263 203:1255 205:1253 206:1262 208:1269 210:1285 213:1293 214:1280 215:1258 216:1233 217:1214 218:1202 219:1202 220:1214 222:1230 224:1236 226:1244 228:1288 230:1316 232:1340 234:1362 236:1373 238:1361 240:1360 241:1352 243:1336 245:1314 247:1297 248:1288 250:1281 254:1287 257:1284 259:1273 262:1266 264:1280 266:1303 268:1311 269:1291 271:1270 273:1250 274:1227 275:1217 276:1209 277:1202 278:1193`;

const macdSignal = `0:1171 4:1167 6:1166 8:1177 10:1195 12:1230 14:1270 16:1310 18:1345 20:1374 22:1385 24:1384 26:1370 28:1352 30:1328 32:1296 34:1270 36:1253 38:1246 42:1248 46:1254 48:1260 50:1272 52:1295 54:1320 56:1352 58:1378 60:1395 62:1403 63:1402 65:1383 67:1362 69:1342 71:1322 74:1305 78:1277 80:1264 82:1254 84:1253 87:1268 90:1294 93:1318 96:1326 99:1324 101:1310 103:1283 105:1260 107:1235 109:1220 111:1212 113:1216 116:1240 119:1270 122:1290 125:1310 127:1334 130:1366 132:1380 135:1385 138:1380 140:1370 142:1350 144:1320 146:1285 148:1240 150:1190 152:1130 154:1080 156:1040 158:1022 161:1022 163:1035 166:1052 169:1070 172:1082 177:1084 180:1095 183:1112 185:1140 188:1175 191:1203 194:1221 199:1230 203:1245 207:1260 210:1273 214:1281 216:1274 219:1250 222:1227 225:1221 227:1232 230:1265 233:1310 236:1340 239:1360 242:1361 245:1350 248:1327 251:1303 254:1290 258:1285 262:1279 264:1276 267:1286 270:1293 273:1291 275:1275 277:1247 278:1235`;

const gbpusd = `1024 1104 1073,1038 1159 1097,1045 1120 1060,1051 1095 1065,1055 1092 1070,996 1106 1020,1015 1204 1190,1073 1208 1098,1068 1102 1087,1083 1110 1105,1060 1110 1062,1001 1085 1015,945 1072 953,872 1018 902,836 912 870,850 905 885,868 910 897,877 982 968,950 1015 978,942 1003 955,
904 960 932,910 950 922,870 925 880,790 905 798,786 865 817,790 880 862,832 888 875,862 892 870,868 952 950,885 998 930,798 945 820,770 862 857,788 872 815,775 835 780,771 818 785,764 850 830,795 905 822,815 937 870,840 900 868,850 890 860,
810 875 848,765 850 768,736 848 820,808 878 823,792 835 822,812 852 825,825 850 843,832 918 903,840 930 880,698 890 705,688 752 735,720 755 730,722 745 732,669 742 713,695 818 798,790 902 815,795 882 852,848 898 890,860 902 888,855 972 958,
932 1060 1025,1018 1145 1135,1115 1183 1165,1130 1175 1140,1115 1152 1140,1070 1148 1085,1045 1130 1062,1048 1145 1068,1035 1090 1040,1022 1060 1028,1025 1068 1038,1030 1078 1055,1028 1195 1165,1100 1286 1252,1165 1255 1188,1180 1258 1202,1180 1222 1205,1128 1208 1140,1122 1195 1158,1140 1250 1212,
1160 1222 1207,1150 1222 1160,1148 1178 1160,1130 1250 1235,1195 1285 1222,1225 1288 1265,1245 1310 1268,1238 1285 1258,1232 1270 1258,1230 1322 1285,1270 1340 1320,1298 1418 1398,1350 1418 1378,1335 1380 1345,1312 1350 1325,1310 1395 1370,1318 1396 1345,1313 1372 1340,1292 1345 1308,1285 1320 1298,
1293 1330 1313,1258 1330 1285,1270 1335 1300,1282 1332 1305,1295 1358 1355,1305 1355 1310,1278 1335 1290,1284 1362 1345,1312 1400 1370,1290 1380 1315,1235 1330 1240,1238 1298 1255,1252 1315 1258,1207 1345 1260,1250 1433 1385,1360 1420 1402,1350 1427 1365,1325 1370 1368,1342 1412 1398,1340 1402 1362,
1240 1372 1245,1210 1250 1222,1182 1245 1190,1188 1230 1205,1173 1220 1215,1210 1345 1333,1270 1404 1365,1310 1372 1320,1282 1325 1302,1270 1310 1275,1205 1305 1228,1160 1255 1195,1001 1200 1103,1105 1185 1172,1118 1180 1162,1138 1295 1282,1170 1280 1225,1215 1312 1230,1218 1248 1240,1220 1260 1252,
1210 1258 1254,1045 1285 1057,1024 1105 1070,1062 1130 1102,1080 1140 1110,1090 1152 1140,1100 1145 1130,1048 1170 1107,1080 1208 1187,1160 1290 1230,1183 1258 1205,1188 1235 1207,1162 1230 1198,1137 1265 1248,1180 1265 1220,1165 1270 1240,1230 1300 1262,1258 1310 1290,1262 1312 1305,1270 1352 1282,
1185 1290 1192,1115 1235 1162,1140 1192 1160,1135 1195 1148,1142 1180 1172,1138 1258 1215,1170 1238 1185,1085 1220 1130,1092 1162 1130,1100 1160 1140,1128 1178 1145,1120 1208 1195,1100 1200 1105,1035 1162 1062,1060 1110 1092,1012 1100 1022,1008 1072 1048,980 1068 1010,1002 1112 1022,858 1028 865,
843 898 880,860 890 882,866 902 892,840 930 895,768 905 780,706 798 735,722 798 770,755 785 775,762 785 770,752 805 790,705 800 728,698 748 720,692 745 732,705 765 748,738 765 748,718 772 725,608 740 675,648 710 700,688 718 700,650 718 655,
622 718 630,470 650 486,468 590 580,498 605 602,562 642 602,522 610 530,505 535 508,496 590 580,498 608 545,545 592 565,540 592 552,550 630 628,605 672 630,535 640 545,543 622 600,592 768 687,655 718 690,655 705 697,625 708 682,620 730 695,
552 702 557,535 600 565,525 570 540,538 598 590,568 622 595,568 640 605,590 658 620,530 635 560,545 600 565,525 568 535,527 610 560,543 858 856,770 860 860,780 878 797,770 850 797,772 850 810,768 822 775,770 860 775,698 790 712,680 755 715,
632 752 637,632 690 655,640 690 680,625 698 692,565 700 580,560 700 668,632 680 648,640 705 690,675 712 700,662 748 706,592 720 680,660 785 760,720 780 750,740 790 760,715 765 720`;

const gbpusdMA = `0:1131 2:1128 4:1112 8:1097 10:1090 12:1070 14:1040 16:1015 18:1005 20:985 22:950 24:912 26:893 28:903 30:897 32:870 34:850 36:845 38:853 40:851 42:826 45:823 47:835 48:839 50:820 52:798 54:791 56:797 58:812 60:840 62:880 64:940 66:990 68:1020 70:1047 72:1082 74:1113 76:1122 78:1123 80:1140 82:1155 84:1190 86:1207 88:1210 90:1228 92:1260 94:1276 96:1305 98:1320 100:1326 102:1330 104:1335 106:1324 108:1326 110:1318 112:1307 114:1315 116:1328 118:1333 119:1337 120:1335 122:1315 124:1299 126:1308 127:1311 129:1305 131:1275 133:1243 135:1238 137:1246 139:1241 141:1210 143:1175 146:1171 150:1166 154:1159 156:1185 158:1215 160:1230 162:1222 164:1218 166:1213 168:1200 170:1185 172:1165 174:1145 176:1127 178:1108 180:1060 182:1028 184:985 186:930 188:890 190:840 192:800 194:780 196:745 198:733 200:715 202:685 204:660 206:637 208:610 210:588 212:575 214:568 216:588 218:605 219:618 222:620 226:622 228:618 230:598 232:622 234:648 236:680 238:705 240:715 242:733 244:744 246:718 248:700 250:685 252:684 254:692 255:695`;

const dates4Jan = ['4 Jan 2011', '5 Jan 12:00', '6 Jan 20:00', '10 Jan 04:00', '11 Jan 12:00', '12 Jan 20:00', '14 Jan 04:00', '17 Jan 12:00', '18 Jan 20:00', '20 Jan 04:00', '21 Jan 12:00', '24 Jan 20:00', '26 Jan 04:00', '27 Jan 12:00', '28 Jan 20:00', '1 Feb 04:00', '2 Feb 12:00', '3 Feb 20:00'];
const dates1Dec = ['1 Dec 2010', '6 Dec 04:00', '8 Dec 20:00', '13 Dec 12:00', '16 Dec 04:00', '20 Dec 20:00', '23 Dec 12:00', '28 Dec 08:00', '31 Dec 00:00', '4 Jan 20:00', '7 Jan 12:00', '12 Jan 04:00', '14 Jan 20:00', '19 Jan 12:00', '24 Jan 04:00', '26 Jan 20:00', '31 Jan 12:00', '3 Feb 04:00'];

// Returns count labels going down from start by step
function priceLabels(start, step, count) {
    return Array.from({ length: count }, (_, i) => (start - step * i).toFixed(4));
}

const charts = [
    {
        id: 'eurusd', axis: 39, dates: dates4Jan, panes: [{
            title: 'EURUSD,H4\u00a0 1.3625 1.3639 1.3624 1.3635', top: 98, bottom: 1478, share: 1,
            grid: [171, 1300 / 17, 18], labels: priceLabels(1.3865, 0.006, 18),
            candles: eurusd, line: eurusdMA, lineStep: 8, lineColor: '#f00', price: 464, priceText: '1.3635'
        }]
    },
    {
        id: 'gbpusd', axis: 0, dates: dates1Dec, panes: [{
            title: 'GBPUSD,H4\u00a0 1.6140 1.6143 1.6129 1.6132', top: 98, bottom: 1478, share: 1,
            grid: [134, 1337 / 18, 19], bars: gbpusd, line: gbpusdMA, lineStep: 4, lineColor: '#f00', price: 368
        }]
    },
    {
        id: 'usdchf', axis: 39, dates: dates1Dec, panes: [{
            title: 'USDCHF,H4\u00a0 0.9454 0.9466 0.9452 0.9463', top: 76, bottom: 982, share: 399 / 597,
            grid: [140, 76, 12], labels: priceLabels(1.0055, 0.007, 12), bars: usdchf, price: 783, priceText: '0.9463'
        }, {
            title: 'MACD(12,26,9) 0.00072 -0.00068', top: 989, bottom: 1437, share: 198 / 597,
            grid: [1214, 1, 1], histogram: macd, line: macdSignal, lineStep: 4, lineColor: '#f00', dashed: true,
            texts: [['0.00707', 1004], ['0.00', 1214], ['-0.00705', 1421]]
        }]
    },
    {
        id: 'usdjpy', axis: 0, dates: dates4Jan, panes: [{
            title: 'USDJPY,H4\u00a0 81.54 81.58 81.50 81.52', top: 76, bottom: 982, share: 399 / 597,
            grid: [97, 86.8, 11], candles: usdjpy, price: 869
        }, {
            title: 'CCI(14) -29.6982', top: 989, bottom: 1437, share: 198 / 597,
            grid: [1244, 1, 1], levels: [1155, 1333], line: cci, lineStep: 8, lineColor: '#20b2aa'
        }]
    }
];

function parsePoints(text) {
    return text.split(' ').map(p => p.split(':').map(Number));
}

function drawPane(chart, pane, x0, x1, y0, y1) {
    const scale = v => Math.round(y0 + (v - pane.top) / (pane.bottom - pane.top) * (y1 - y0));
    let grid = '';
    let out = '';

    // Grid
    for (let x = x0 + 33; x < x1; x += 32) grid += `M${x} ${y0}V${y1}`;
    for (let i = 0; i < pane.grid[2]; i++) {
        const y = scale(pane.grid[0] + pane.grid[1] * i);
        grid += `M${x0 + 1} ${y}H${x1}`;
        if (pane.labels) {
            out += `<path d="M${x1} ${y}h4" stroke="#fff"/><text x="${x1 + 5}" y="${y + 3}">${pane.labels[i]}</text>`;
        }
    }
    out = `<path d="${grid}" stroke="#778899" stroke-dasharray="3 3"/>` + out;
    (pane.levels || []).forEach(v => {
        out += `<path d="M${x0} ${scale(v)}H${x1}" stroke="#c0c0c0" stroke-dasharray="3 3"/>`;
    });
    if (pane.price) out += `<path d="M${x0} ${scale(pane.price)}H${x1}" stroke="#778899"/>`;

    // Histogram
    if (pane.histogram) {
        const pts = parsePoints(pane.histogram);
        const zero = scale(1214);
        let d = '';
        for (let i = 1; i < pts.length; i++) {
            const [a, va] = pts[i - 1];
            const [b, vb] = pts[i];
            for (let k = a; k < b; k++) d += `M${x0 + 1 + k * 4} ${zero}V${scale(va + (vb - va) * (k - a) / (b - a))}`;
        }
        const last = pts[pts.length - 1];
        d += `M${x0 + 1 + last[0] * 4} ${zero}V${scale(last[1])}`;
        out += `<path d="${d}" stroke="#c0c0c0"/>`;
    }

    // Open/high/low/close bars
    if (pane.bars) {
        let d = '';
        let open = null;
        pane.bars.split(',').forEach((bar, k) => {
            const [high, low, close] = bar.trim().split(' ').map(Number);
            const x = x0 + 1 + k * 4;
            d += `M${x} ${scale(high)}V${scale(low)}M${x} ${scale(close)}h1`;
            if (open !== null) d += `M${x} ${scale(Math.min(low, Math.max(high, open)))}h-1`;
            open = close;
        });
        out += `<path d="${d}" stroke="#0f0" stroke-linecap="square"/>`;
    }

    // Candles
    if (pane.candles) {
        pane.candles.split(',').forEach((candle, k) => {
            const [high, top, bottom, low] = candle.trim().split(' ').map(v => parseInt(v));
            const x = x0 + 1 + k * 8;
            const t = scale(top);
            const b = scale(bottom);
            out += `<path d="M${x} ${scale(high)}V${scale(low)}" stroke="#0f0"/>`;
            if (t === b) out += `<path d="M${x - 2} ${t}h5" stroke="#0f0"/>`;
            else out += `<rect x="${x - 2}" y="${t}" width="4" height="${b - t}" stroke="#0f0" fill="${candle.endsWith('d') ? '#fff' : '#000'}"/>`;
        });
    }

    if (pane.line) {
        const pts = parsePoints(pane.line).map(([k, v]) => `${x0 + 1 + k * pane.lineStep},${scale(v)}`).join(' ');
        out += `<polyline points="${pts}" fill="none" stroke="${pane.lineColor}"${pane.dashed ? ' stroke-dasharray="3 3"' : ''}/>`;
    }

    out = `<svg x="0" y="0" width="${x1 + (chart.axis || 0)}" height="100%">${out}</svg>`;
    out += `<rect x="${x0}" y="${y0}" width="${chart.axis ? x1 - x0 : x1 - x0 + 9}" height="${y1 - y0}" fill="none" stroke="#fff"/>`;
    out += `<text x="${x0 + 5}" y="${y0 + 11}" stroke="#000" stroke-width="2" paint-order="stroke">${pane.title}</text>`;
    if (pane.priceText) {
        const y = scale(pane.price);
        out += `<rect x="${x1 + 1}" y="${y - 6}" width="36" height="11" fill="#fff"/><text x="${x1 + 5}" y="${y + 3}" fill="#000">${pane.priceText}</text>`;
    }
    (pane.texts || []).forEach(([text, v]) => {
        out += `<text x="${x1 + 3}" y="${scale(v) + 3}">${text}</text>`;
    });
    return out;
}

function drawChart(chart) {
    const svg = document.getElementById(chart.id);
    const width = svg.clientWidth;
    const height = svg.clientHeight;
    const x0 = 3;
    const x1 = width - (chart.axis || 0);
    const gap = 3;
    const inner = height - 21 - gap * (chart.panes.length - 1);
    let y = 3;
    let out = '';

    chart.panes.forEach(pane => {
        const h = Math.round(inner * pane.share);
        out += drawPane(chart, pane, x0, x1, y, y + h);
        y += h + gap;
    });
    y -= gap;

    chart.dates.forEach((text, i) => {
        const x = x0 + 1 + i * 64;
        if (x < x1) out += `<path d="M${x} ${y}v4" stroke="#fff"/><text x="${x - 1}" y="${y + 12}">${text}</text>`;
    });
    // half pixel shift keeps the one pixel lines sharp
    svg.innerHTML = `<g transform="translate(.5 .5)" shape-rendering="crispEdges">${out}</g>`;
}

function drawAll() {
    charts.forEach(drawChart);
}

window.addEventListener('resize', drawAll);
drawAll();
```
